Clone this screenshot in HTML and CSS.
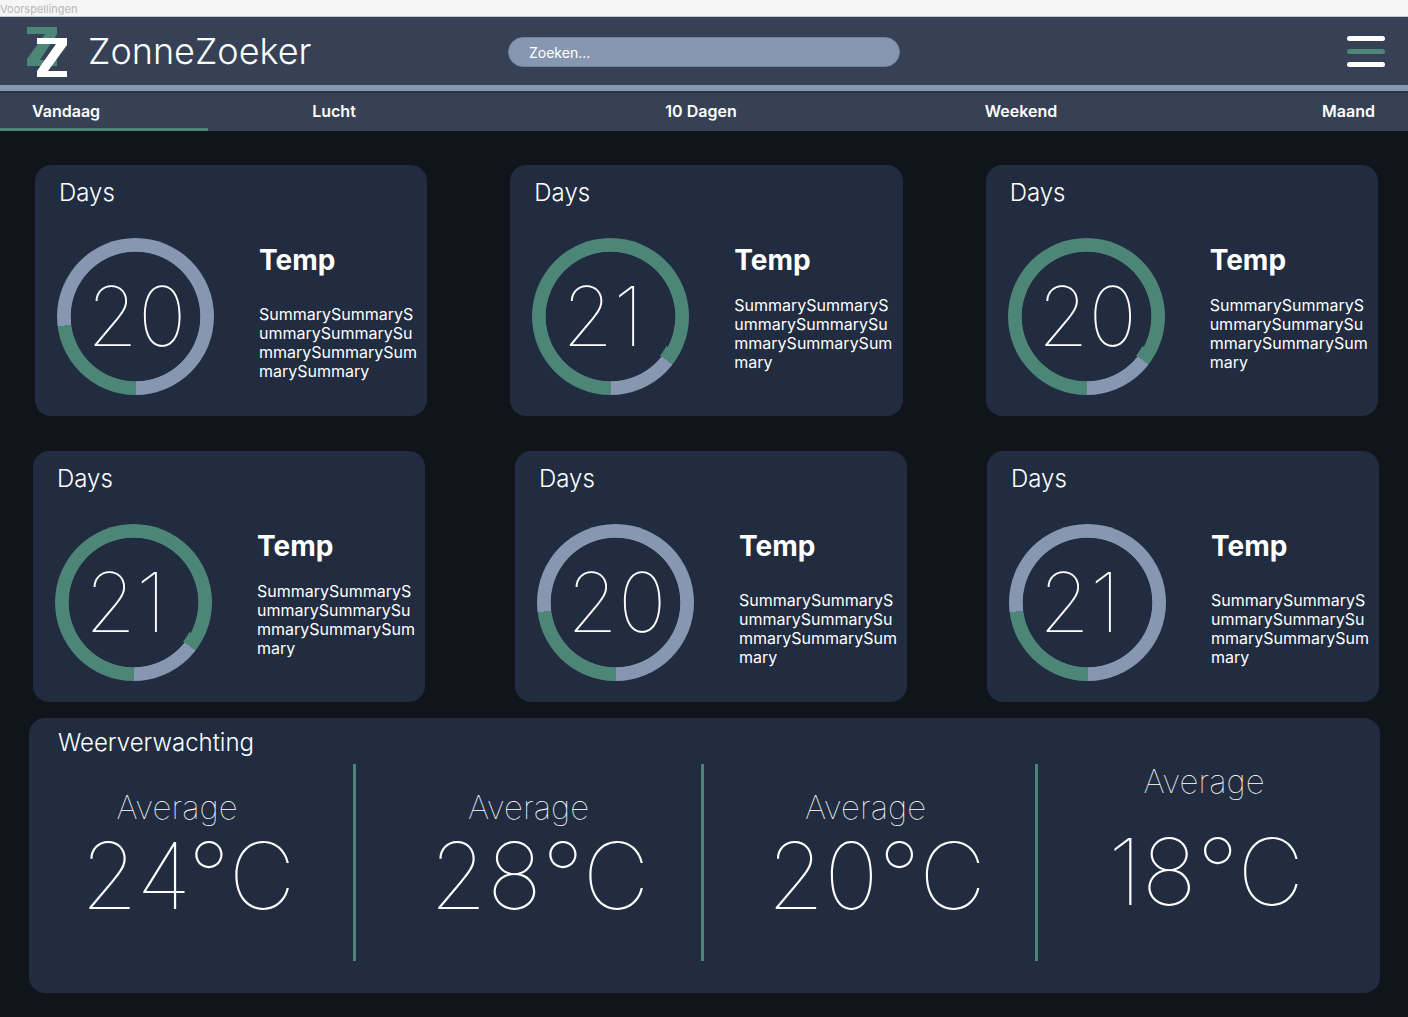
FILE: index.html
```html
<!DOCTYPE html>
<html lang="nl">
<head>
<meta charset="utf-8">
<meta name="viewport" content="width=device-width, initial-scale=1">
<title>ZonneZoeker</title>
<link rel="stylesheet" href="styles.css">
</head>
<body>
<div class="frame-label">Voorspellingen</div>
<header class="header">
  <a class="brand" href="#">
    <svg class="brand-mark" viewBox="0 0 42 52" width="42" height="52" aria-hidden="true">
      <path fill="#4d8577" d="M1 1H31V8L14 34H31V40H1V33L19 8H1Z"/>
      <path fill="#fff" d="M11 12H41V19L22 45H41V51H11V45L30 18H11Z"/>
    </svg>
    <span class="brand-name">ZonneZoeker</span>
  </a>
  <input class="search" type="search" placeholder="Zoeken..." aria-label="Zoeken">
  <button class="menu" type="button" aria-label="Menu"><span class="bar"></span><span class="bar bar-green"></span><span class="bar"></span></button>
</header>
<nav class="tabs">
  <a class="tab tab-first" href="#" aria-current="page">Vandaag</a>
  <a class="tab" href="#">Lucht</a>
  <a class="tab" href="#">10 Dagen</a>
  <a class="tab" href="#">Weekend</a>
  <a class="tab tab-last" href="#">Maand</a>
</nav>
<main class="main">
  <div class="row">
    <article class="card">
      <h2 class="card-title">Days</h2>
      <div class="card-body">
        <div class="dial dial-low"><span class="dial-value">20</span></div>
        <div class="info"><h3 class="info-title">Temp</h3><p class="info-text info-text-low">SummarySummarySummarySummarySummarySummarySummarySummary</p></div>
      </div>
    </article>
    <article class="card">
      <h2 class="card-title">Days</h2>
      <div class="card-body">
        <div class="dial dial-high"><span class="dial-value">21</span></div>
        <div class="info"><h3 class="info-title">Temp</h3><p class="info-text">SummarySummarySummarySummarySummarySummarySummary</p></div>
      </div>
    </article>
    <article class="card">
      <h2 class="card-title">Days</h2>
      <div class="card-body">
        <div class="dial dial-high"><span class="dial-value">20</span></div>
        <div class="info"><h3 class="info-title">Temp</h3><p class="info-text">SummarySummarySummarySummarySummarySummarySummary</p></div>
      </div>
    </article>
  </div>
  <div class="row row-second">
    <article class="card">
      <h2 class="card-title">Days</h2>
      <div class="card-body">
        <div class="dial dial-high"><span class="dial-value">21</span></div>
        <div class="info"><h3 class="info-title">Temp</h3><p class="info-text">SummarySummarySummarySummarySummarySummarySummary</p></div>
      </div>
    </article>
    <article class="card card-middle">
      <h2 class="card-title">Days</h2>
      <div class="card-body">
        <div class="dial dial-low"><span class="dial-value">20</span></div>
        <div class="info"><h3 class="info-title">Temp</h3><p class="info-text info-text-low">SummarySummarySummarySummarySummarySummarySummary</p></div>
      </div>
    </article>
    <article class="card">
      <h2 class="card-title">Days</h2>
      <div class="card-body">
        <div class="dial dial-low"><span class="dial-value">21</span></div>
        <div class="info"><h3 class="info-title">Temp</h3><p class="info-text info-text-low">SummarySummarySummarySummarySummarySummarySummary</p></div>
      </div>
    </article>
  </div>
  <section class="forecast">
    <h2 class="forecast-title">Weerverwachting</h2>
    <div class="forecast-grid">
      <div class="average"><span class="average-label">Average</span><span class="average-value">24°C</span></div>
      <div class="average average-second"><span class="average-label">Average</span><span class="average-value">28°C</span></div>
      <div class="average average-third"><span class="average-label">Average</span><span class="average-value">20°C</span></div>
      <div class="average average-last"><span class="average-label">Average</span><span class="average-value">18°C</span></div>
    </div>
  </section>
</main>
</body>
</html>
```
FILE: styles.css
```css
:root {
  --page: #10151b;
  --bar: #374155;
  --card: #212c40;
  --green: #4d8577;
  --slate: #8897b1;
}

* { box-sizing: border-box; }

body {
  margin: 0;
  min-height: 100vh;
  background: var(--page);
  color: #fff;
  font-family: Inter, "Liberation Sans", sans-serif;
}

h2, h3, p { margin: 0; }
a { color: inherit; text-decoration: none; }

.frame-label {
  height: 17px;
  background: #f5f5f5;
  color: #b8b8b8;
  font-size: 11px;
  line-height: 18px;
  border-bottom: 1px solid #c3c7ce;
}

/* Header */
.header {
  display: grid;
  grid-template-columns: 1fr 392px 1fr;
  align-items: center;
  height: 74px;
  padding-top: 2px;
  background: var(--bar);
  border-bottom: 6px solid var(--slate);
}
.brand { display: flex; align-items: center; gap: 20px; padding-left: 26px; }
.brand-mark { display: block; }
.brand-name { font-size: 36px; font-weight: 300; line-height: 46px; padding-bottom: 2px; }
.search {
  width: 100%;
  height: 30px;
  padding: 0 20px;
  border: 1px solid #75839c;
  border-radius: 15px;
  background: var(--slate);
  color: #fff;
  font: 400 14px/20px Inter, "Liberation Sans", sans-serif;
  appearance: none;
}
.search::placeholder { color: #fff; opacity: 1; }
.menu {
  display: flex;
  flex-direction: column;
  justify-self: end;
  gap: 8px;
  margin-right: 23px;
  padding: 0 0 2px;
  border: 0;
  background: none;
}
.bar { width: 38px; height: 5px; border-radius: 3px; background: #fff; }
.bar-green { background: var(--green); }

/* Tabs */
.tabs {
  display: grid;
  grid-template-columns: 208fr 252fr 482fr 158fr 308fr;
  height: 40px;
  border-top: 2px solid #2b3446;
  background: var(--bar);
}
.tab {
  padding-top: 8px;
  font-size: 16px;
  font-weight: 600;
  line-height: 20px;
  text-align: center;
}
.tab-first { padding-left: 32px; text-align: left; border-bottom: 3px solid var(--green); }
.tab-last { padding-right: 33px; text-align: right; }

/* Day cards */
.main { padding: 34px 28px 24px 29px; }
.row { display: flex; gap: 83px; padding: 0 2px 0 6px; }
.row-second { gap: 80px; margin-top: 35px; padding: 0 1px 0 4px; }
.card {
  flex: 1;
  min-width: 0;
  height: 251px;
  padding: 13px 8px 0 22px;
  border-radius: 16px;
  background: var(--card);
}
.card-middle { margin-left: 10px; }
.card-title { padding-left: 2px; font-size: 24px; font-weight: 300; line-height: 30px; }
.card-body { display: flex; gap: 45px; margin-top: 30px; }
.dial {
  display: flex;
  align-items: center;
  flex: none;
  width: 157px;
  height: 157px;
  padding-left: 30px;
  border-radius: 50%;
}
.dial-low {
  background:
    radial-gradient(closest-side, var(--card) 82%, transparent 83%),
    conic-gradient(var(--slate) 50%, var(--green) 50% 73%, var(--slate) 73%);
}
/* The green arc ends in a slightly thicker lip */
.dial-high {
  background:
    radial-gradient(closest-side, var(--card) 80%, transparent 81%),
    conic-gradient(transparent 118deg, var(--green) 118deg 128deg, transparent 128deg),
    radial-gradient(closest-side, var(--card) 82%, transparent 83%),
    conic-gradient(var(--green) 128deg, var(--slate) 128deg 180deg, var(--green) 180deg);
}
.dial-value { font-size: 82px; font-weight: 100; line-height: 100px; }
.info { flex: 1; min-width: 0; }
.info-title { padding-top: 4px; font-size: 28px; font-weight: 700; line-height: 36px; }
.info-text {
  margin-top: 18px;
  font-size: 16px;
  font-weight: 400;
  line-height: 19px;
  overflow-wrap: anywhere;
}
.info-text-low { margin-top: 27px; }

/* Averages */
.forecast {
  height: 275px;
  margin-top: 16px;
  padding-top: 10px;
  border-radius: 16px;
  background: var(--card);
}
.forecast-title { padding-left: 29px; font-size: 24px; font-weight: 300; line-height: 30px; }
.forecast-grid {
  display: grid;
  grid-template-columns: 327fr 348fr 334fr 342fr;
  margin-top: 6px;
}
.average {
  display: flex;
  flex-direction: column;
  align-items: center;
  height: 197px;
  padding: 22px 6px 0 0;
  border-right: 3px solid var(--green);
}
.average-second { padding-left: 28px; }
.average-third { padding-left: 20px; }
.average-label { margin-right: 22px; font-size: 33px; font-weight: 100; line-height: 42px; }
.average-value { font-size: 92px; font-weight: 100; line-height: 96px; }
.average-last { margin-top: -4px; padding-top: 0; border-right: 0; }
.average-last .average-label { margin: 0 4px 22px 0; }
```
